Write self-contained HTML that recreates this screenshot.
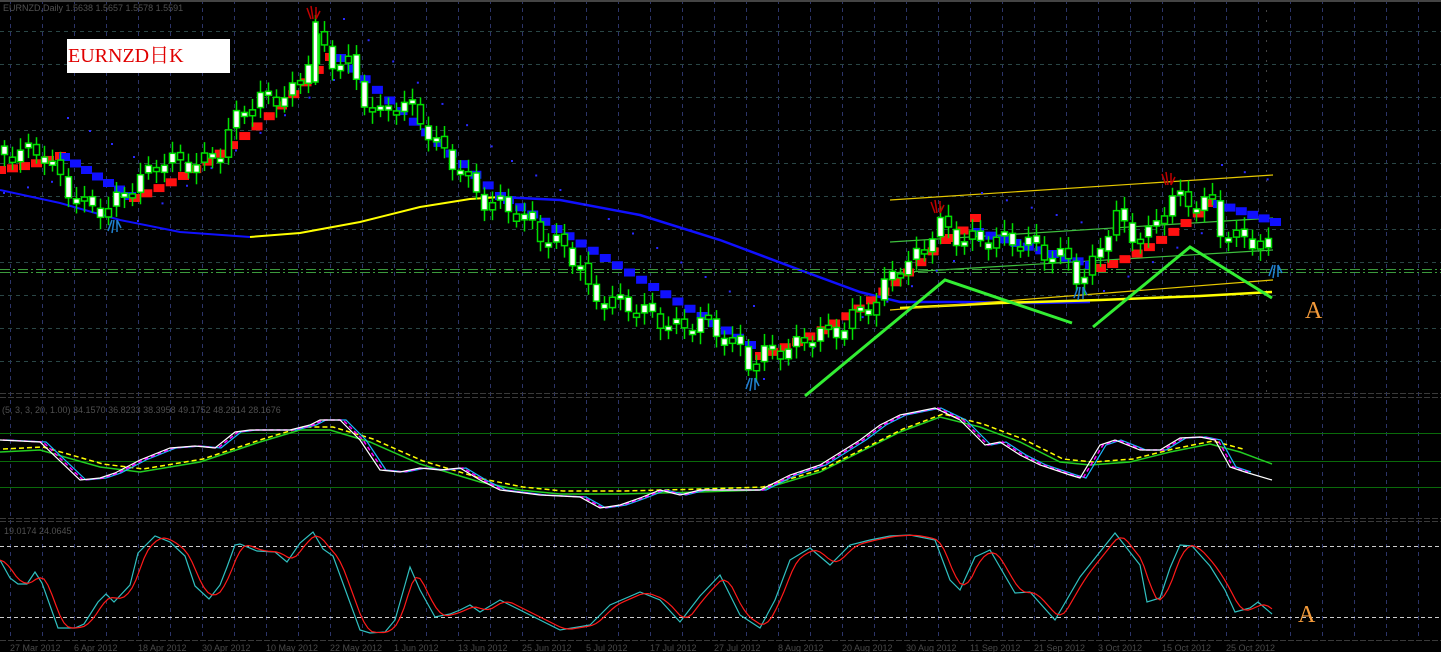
<!DOCTYPE html>
<html><head><meta charset="utf-8"><style>
html,body{margin:0;padding:0;background:#000;width:1441px;height:652px;overflow:hidden}
svg{display:block}
text{font-family:"Liberation Sans",sans-serif}
</style></head><body>
<svg id="s" width="1441" height="652" xmlns="http://www.w3.org/2000/svg">
<rect width="1441" height="652" fill="#000"/>
<g id="grid"></g>
<g id="main"></g>
<text x="3" y="11" font-size="9" fill="#505050">EURNZD,Daily  1.5638 1.5657 1.5578 1.5591</text>
<text x="2" y="413" font-size="9" fill="#505050">(5, 3, 3, 20, 1.00) 34.1570 36.8233 38.3958 49.1752 48.2814 28.1676</text>
<text x="4" y="534" font-size="9" fill="#505050">19.0174 24.0645</text>
<rect x="67" y="39" width="163" height="34" fill="#fff"/>
<text x="68" y="62" font-size="20" fill="#e00000" style="font-family:'Liberation Serif','Noto Serif CJK SC',serif">EURNZD日K</text>
<text x="1305" y="318" font-size="24" fill="#f39a3a" style="font-family:'Liberation Serif',serif">A</text>
<text x="1298" y="622" font-size="24" fill="#f39a3a" style="font-family:'Liberation Serif',serif">A</text>
<g id="dates" font-size="9" fill="#4a4a4a"></g>
</svg>
<script>
(function(){
var NS="http://www.w3.org/2000/svg";
function el(p,t,a){var e=document.createElementNS(NS,t);for(var k in a)e.setAttribute(k,a[k]);document.getElementById(p).appendChild(e);return e;}
function interp(P,x){if(x<=P[0][0])return P[0][1];for(var i=1;i<P.length;i++){if(x<=P[i][0]){var a=P[i-1],b=P[i];return a[1]+(b[1]-a[1])*(x-a[0])/(b[0]-a[0]);}}return P[P.length-1][1];}
function poly(g,P,c,w,dash){var s=P.map(function(p){return p[0]+","+p[1]}).join(" ");var a={points:s,fill:"none",stroke:c,"stroke-width":w||1};if(dash)a["stroke-dasharray"]=dash;el(g,"polyline",a);}
var x,y,i;
for(x=10;x<1441;x+=32){el("grid","line",{x1:x+.5,y1:0,x2:x+.5,y2:640,stroke:"#2c3468","stroke-dasharray":"4,4"});}
for(y=31;y<392;y+=33){el("grid","line",{x1:0,y1:y+.5,x2:1441,y2:y+.5,stroke:"#2a4646","stroke-dasharray":"4,4"});}
el("grid","line",{x1:1266.5,y1:0,x2:1266.5,y2:392,stroke:"#444","stroke-dasharray":"2,8"});
el("grid","rect",{x:0,y:0,width:1441,height:2,fill:"#444"});
[393,397,518,521,640].forEach(function(y){el("grid","line",{x1:0,y1:y+.5,x2:1441,y2:y+.5,stroke:"#3a3a3a","stroke-dasharray":"6,2"});});
[433,461,487].forEach(function(y){el("grid","line",{x1:0,y1:y+.5,x2:1441,y2:y+.5,stroke:"#0a6a0a"});});
[546,617].forEach(function(y){el("grid","line",{x1:0,y1:y+.5,x2:1441,y2:y+.5,stroke:"#ccc","stroke-dasharray":"4,3"});});
var P=[[0,155],[40,150],[60,180],[80,205],[110,210],[120,195],[140,180],[160,160],[200,165],[220,150],[240,110],[260,100],[290,95],[300,80],[315,35],[330,65],[345,55],[360,95],[380,115],[400,100],[420,120],[440,150],[460,170],[480,200],[500,205],[520,215],[540,235],[560,245],[580,265],[590,300],[610,300],[640,310],[660,320],[680,330],[700,320],[720,335],[740,350],[750,365],[770,350],[790,350],[810,335],[840,330],[860,310],[880,300],[890,270],[910,265],[930,235],[940,225],[960,240],[990,240],[1020,240],[1050,255],[1070,260],[1080,285],[1090,270],[1100,245],[1115,215],[1130,235],[1150,235],[1170,195],[1190,205],[1210,200],[1220,230],[1240,240],[1260,240],[1272,265]];
poly("main",[[0,190],[60,203],[120,220],[180,232],[250,237]],"#1010ff",2);
poly("main",[[250,237],[300,233],[360,222],[420,207],[470,199],[500,197]],"#ffff00",2);
poly("main",[[500,197],[560,200],[640,215],[720,240],[800,270],[860,292],[900,302],[960,302],[1040,303],[1090,302]],"#1010ff",2.5);
poly("main",[[900,308],[1000,303],[1100,300],[1200,296],[1272,292]],"#ffff00",2.5);
poly("main",[[890,200],[1273,175]],"#e6c800",1.2);
poly("main",[[890,310],[1273,280]],"#e6c800",1.2);
poly("main",[[890,242],[1273,218]],"#3ec03e",1.2);
poly("main",[[890,273],[1273,250]],"#3ec03e",1.2);
el("main","line",{x1:0,y1:269.5,x2:1441,y2:269.5,stroke:"#3c9a3c","stroke-dasharray":"10,3,2,3"});
el("main","line",{x1:0,y1:272.5,x2:1441,y2:272.5,stroke:"#3c9a3c","stroke-dasharray":"10,3,2,3"});
var S=[[0,170,60,156,"#ff1010"],[64,157,130,196,"#1010ff"],[134,198,330,57,"#ff1010"],[340,58,500,196,"#1010ff"],[508,200,750,345,"#1010ff"],[760,356,945,240,"#ff1010"],[950,238,975,218,"#ff1010"],[978,232,1090,265,"#1010ff"],[1100,268,1210,203,"#ff1010"],[1218,204,1275,222,"#1010ff"]];
S.forEach(function(s){var red=s[4]=="#ff1010";var n=Math.max(1,Math.round((s[2]-s[0])/12));for(var j=0;j<=n;j++){var t=j/n;var xx=s[0]+(s[2]-s[0])*t;var yy=s[1]+(s[3]-s[1])*(red&&s[3]<s[1]?t*t*.5+t*.5:t);el("main","rect",{x:xx-5,y:yy-4,width:11,height:8,fill:s[4]});}
for(var j=0;j<=n;j+=2){var t=j/n;var xx=s[0]+(s[2]-s[0])*t+3;el("main","rect",{x:xx,y:s[1]+(s[3]-s[1])*t+(red?22:-40),width:2,height:2,fill:"#2a2aff"});}});
for(i=0;i<160;i++){x=4+i*8;if(x>1272)break;var c=interp(P,x)+9*Math.sin(i*1.7);var o=interp(P,x-8)+9*Math.sin(i*1.7-1.4);var tp=Math.min(o,c),bt=Math.max(o,c);if(bt-tp<4){bt=tp+4;}
var hi=tp-6-6*Math.abs(Math.sin(i*2.3)),lo=bt+6+6*Math.abs(Math.cos(i*1.3));
el("main","line",{x1:x+.5,y1:hi,x2:x+.5,y2:lo,stroke:"#00e000","stroke-width":1.5});
el("main","rect",{x:x-2.5,y:tp,width:6,height:bt-tp,fill:(i%3!=1?"#fff":"#000"),stroke:"#00e000","stroke-width":1.5});}
el("main","line",{x1:315.5,y1:15,x2:315.5,y2:85,stroke:"#00e000","stroke-width":1.5});
el("main","rect",{x:313,y:22,width:5,height:60,fill:"#fff",stroke:"#00e000","stroke-width":1.5});
poly("main",[[805,396],[945,280],[1072,323]],"#33ee33",3);
poly("main",[[1093,327],[1190,247],[1272,298]],"#33ee33",3);
[[313,14,"#c00000"],[937,208,"#c00000"],[1168,180,"#c00000"]].forEach(function(h){el("main","path",{d:"M"+(h[0]-6)+" "+(h[1]-6)+"l4 11 M"+(h[0]-2)+" "+(h[1]-8)+"l2 13 M"+(h[0]+3)+" "+(h[1]-7)+"l0 12 M"+(h[0]+7)+" "+(h[1]-3)+"l-4 8",stroke:h[2],fill:"none","stroke-width":1.5});});
[[114,225],[752,383],[1080,292],[1275,270]].forEach(function(h){el("main","path",{d:"M"+(h[0]-6)+" "+(h[1]+6)+"l4 -11 M"+(h[0]-2)+" "+(h[1]+8)+"l2 -13 M"+(h[0]+3)+" "+(h[1]+7)+"l0 -12 M"+(h[0]+7)+" "+(h[1]+3)+"l-4 -8",stroke:"#2080d0",fill:"none","stroke-width":1.5});});
var W=[[0,440],[40,442],[80,480],[100,478],[115,473],[140,460],[170,448],[195,446],[215,448],[235,432],[250,430],[290,430],[310,425],[320,420],[340,420],[360,440],[380,470],[400,472],[420,468],[440,470],[460,468],[480,480],[500,490],[540,495],[580,497],[600,508],[620,505],[640,498],[660,490],[680,495],[700,490],[740,490],[760,490],[790,475],[820,465],[860,440],[880,425],[900,415],[935,408],[960,420],[985,445],[1000,442],[1020,455],[1040,465],[1070,475],[1080,478],[1100,445],[1115,440],[1140,450],[1160,450],[1180,438],[1200,437],[1215,440],[1230,467],[1245,472],[1272,480]];
var Y=[[0,450],[40,448],[100,465],[140,470],[200,460],[260,440],[300,428],[330,428],[370,440],[420,462],[480,480],[520,488],[560,492],[620,492],[700,490],[760,488],[820,470],[860,450],[900,430],[940,415],[980,425],[1020,440],[1060,460],[1090,463],[1130,460],[1170,450],[1210,442],[1240,450],[1272,462]];
function shift(A,d,dy){return A.map(function(p){return[p[0]+d,p[1]+(dy||0)]}).filter(function(p){return p[0]<=1272});}
poly("main",shift(Y,0,2),"#22cc22",1.5);
poly("main",shift(Y,3,-1),"#ffff00",1.5,"5,3");
poly("main",shift(W,6),"#19b8ff",1.2);
poly("main",shift(W,3),"#ff00ff",1.5,"4,3");
poly("main",W,"#ffffff",1.2);
var C=[[0,560],[10,578],[18,584],[27,584],[35,572],[42,583],[58,628],[75,628],[84,624],[98,602],[106,594],[114,602],[130,585],[138,553],[155,536],[170,542],[185,556],[195,586],[209,599],[220,585],[227,567],[235,545],[240,544],[257,551],[275,552],[287,562],[300,543],[313,532],[323,549],[333,556],[360,630],[370,633],[385,632],[395,620],[410,567],[420,590],[435,617],[450,614],[460,610],[470,605],[480,612],[500,600],[540,620],[560,630],[590,625],[610,605],[640,592],[660,600],[680,622],[700,596],[720,575],[740,615],[760,628],[775,600],[790,560],[810,548],[830,565],[850,545],[870,540],[890,536],[910,535],[935,540],[950,580],[960,590],[975,557],[990,550],[1015,593],[1030,592],[1055,620],[1080,577],[1115,533],[1140,565],[1147,602],[1160,598],[1170,568],[1180,545],[1192,546],[1210,566],[1225,590],[1235,612],[1250,608],[1258,602],[1272,614]];
var R=[];for(x=0;x<=1272;x+=4){var s=0;for(var k=0;k<5;k++)s+=interp(C,x-3*k);R.push([x,s/5]);}
poly("main",C,"#30c0c0",1.2);
poly("main",R,"#ff1a1a",1.2);
var D=["27 Mar 2012","6 Apr 2012","18 Apr 2012","30 Apr 2012","10 May 2012","22 May 2012","1 Jun 2012","13 Jun 2012","25 Jun 2012","5 Jul 2012","17 Jul 2012","27 Jul 2012","8 Aug 2012","20 Aug 2012","30 Aug 2012","11 Sep 2012","21 Sep 2012","3 Oct 2012","15 Oct 2012","25 Oct 2012"];
D.forEach(function(d,j){var t=el("dates","text",{x:10+j*64,y:651});t.textContent=d;});
})();
</script>
</body></html>
